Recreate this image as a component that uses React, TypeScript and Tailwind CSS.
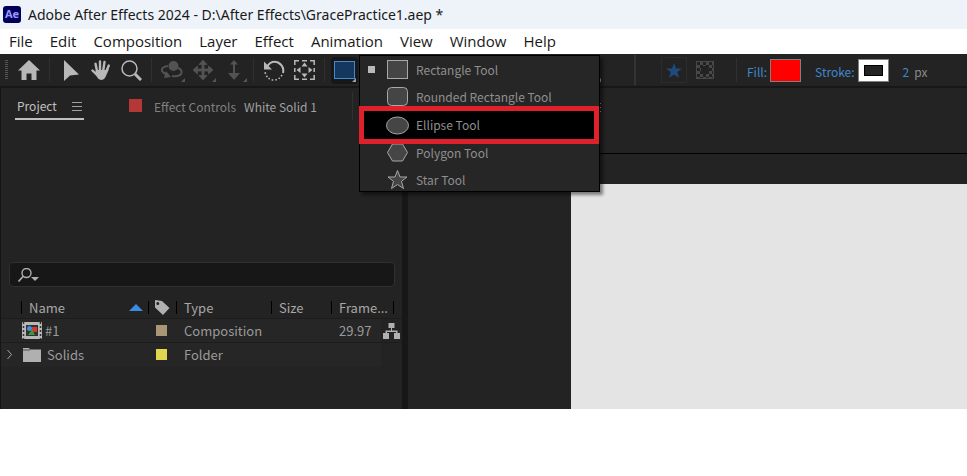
import type { ReactNode } from "react";

const menus = ["File", "Edit", "Composition", "Layer", "Effect", "Animation", "View", "Window", "Help"];

function Divider() {
  return <span className="h-6 w-px shrink-0 bg-[#303030]" />;
}

function Corner({ dim = false }: { dim?: boolean }) {
  return (
    <svg viewBox="0 0 4 4" className={`absolute right-0.5 bottom-0.5 size-1 ${dim ? "text-[#555]" : "text-[#a0a0a0]"}`}>
      <path d="M4 0V4H0Z" fill="currentColor" />
    </svg>
  );
}

function Tool({ label, dim = false, children }: { label: string; dim?: boolean; children: ReactNode }) {
  return (
    <button
      type="button"
      aria-label={label}
      className={`relative flex h-7 w-[31px] shrink-0 items-center justify-center ${dim ? "text-[#535353]" : "text-[#b8b8b8]"}`}
    >
      {children}
      {dim && <Corner dim />}
    </button>
  );
}

function Group({ children }: { children: ReactNode }) {
  return <div className="flex shrink-0 items-center px-1">{children}</div>;
}

const shapes: { name: string; drawing: ReactNode }[] = [
  { name: "Rectangle Tool", drawing: <rect x="1.500" y="1.500" width="20" height="18" /> },
  { name: "Rounded Rectangle Tool", drawing: <rect x="1.500" y="1.500" width="20" height="18" rx="4" /> },
  { name: "Ellipse Tool", drawing: <ellipse cx="11.5" cy="10.5" rx="11" ry="8.5" /> },
  { name: "Polygon Tool", drawing: <path d="M6.500 2H16.500L21.500 10.500L16.500 19H6.500L1.500 10.500Z" /> },
  { name: "Star Tool", drawing: <path d="M11.500 1.500L14 8H21L15.500 12.300L17.500 19.500L11.500 15.500L5.500 19.500L7.500 12.300L2 8H9Z" /> },
];

function ShapeMenu() {
  return (
    <div
      role="menu"
      className="absolute top-0 left-full z-10 h-[137px] w-[241px] border border-black bg-[#262626] shadow-[3px_3px_3px_rgba(0,0,0,0.45)]"
    >
      {shapes.map((shape, i) => (
        <button
          key={shape.name}
          type="button"
          role="menuitem"
          className={
            shape.name === "Ellipse Tool"
              ? "relative z-10 -mx-px -mt-1 -mb-[5px] flex h-[38px] w-[240px] items-center border-[5px] border-[#de212b] bg-black pl-[22px] text-[12px] text-[#8f8f8f]"
              : "flex h-[27px] w-full items-center pl-[26px] text-[12px] text-[#8f8f8f]"
          }
        >
          {i === 0 && <span className="-ml-[18px] mr-[11px] size-[7px] bg-[#b9b9b9]" />}
          <svg viewBox="0 0 23 21" className="h-[21px] w-[23px] shrink-0 fill-[#454545] stroke-[#a8a8a8]">
            {shape.drawing}
          </svg>
          <span className="ml-[7px] whitespace-nowrap">{shape.name}</span>
        </button>
      ))}
    </div>
  );
}

function Toolbar() {
  return (
    <div className="flex h-8 items-center bg-[#232323]">
      <span className="ml-[5px] h-5 w-[3px] shrink-0 bg-[repeating-linear-gradient(to_bottom,#555_0_1px,#232323_1px_2px)]" />
      <button type="button" aria-label="Home" className="mr-[9px] ml-2.5 flex h-7 w-[22px] shrink-0 items-center text-[#b8b8b8]">
        <svg viewBox="0 0 22 20" className="h-5 w-[22px] fill-current">
          <path d="M11 0L22 10.500H18.500V20H13.500V13.500H8.500V20H3.500V10.500H0Z" />
        </svg>
      </button>
      <Divider />
      <Group>
        <Tool label="Selection">
          <svg viewBox="0 0 16 21" className="ml-0.5 h-[21px] w-4 fill-current">
            <path d="M1 0L16 14.500L7 15.500L1 21Z" />
          </svg>
        </Tool>
        <Tool label="Hand">
          <svg viewBox="0 0 20 21" className="h-[21px] w-5 fill-none stroke-current" strokeLinecap="round" strokeWidth="2.400">
            <path d="M6 11L4.500 3.800M9 10V1.500M12.300 10L13.500 2M15 12L17.800 5.500M6 15L1.500 10.500" />
            <path d="M5 10H15.500L18 9L14.500 17Q13 20 10 20Q7.500 20 6 17L4 13Z" className="fill-current" stroke="none" />
          </svg>
        </Tool>
        <Tool label="Zoom">
          <svg viewBox="0 0 21 21" className="h-[21px] w-[21px] fill-none stroke-current">
            <circle cx="8.500" cy="8.500" r="7.500" strokeWidth="1.500" />
            <path d="M14 14L20 20" strokeWidth="3" />
          </svg>
        </Tool>
      </Group>
      <Divider />
      <Group>
        <Tool label="Orbit" dim>
          <svg viewBox="0 0 22 20" className="h-5 w-[22px] fill-none stroke-current" strokeWidth="2">
            <circle cx="12.500" cy="6" r="5" className="fill-current" stroke="none" />
            <path d="M7 6Q0 7 1 11Q2 13 6 14.500M17 8Q22 10 20 14Q18 17 11 16" />
            <path d="M3 18L10 17L5 11Z" className="fill-current" stroke="none" />
          </svg>
        </Tool>
        <Tool label="Pan camera" dim>
          <svg viewBox="0 0 20 20" className="size-5 fill-current">
            <path d="M10 0L14 4.500H11V9H15.500V6L20 10L15.500 14V11H11V15.500H14L10 20L6 15.500H9V11H4.500V14L0 10L4.500 6V9H9V4.500H6Z" stroke="currentColor" strokeWidth=".8" />
          </svg>
        </Tool>
        <Tool label="Dolly" dim>
          <svg viewBox="0 0 14 20" className="h-5 w-3.5 fill-current">
            <path d="M7 0L11 4.500H8V13H13L7 20L1 13H6V4.500H3Z" />
          </svg>
        </Tool>
      </Group>
      <Divider />
      <Group>
        <Tool label="Rotation">
          <svg viewBox="0 0 22 21" className="h-[21px] w-[22px] fill-none stroke-current">
            <path d="M4 6.500Q8.500 0 15 2.500Q21.500 6 20 13" strokeWidth="2" />
            <path d="M1 1.500V9.500H9Z" className="fill-current" stroke="none" />
            <path d="M19 15Q16 20 11 20Q4 20 2 12" strokeWidth="1.600" strokeDasharray="1.500 2" />
          </svg>
        </Tool>
        <Tool label="Pan Behind">
          <svg viewBox="0 0 21 20" className="h-5 w-[21px] fill-current">
            <path d="M.800 5V.800H5M8 .800H13M16 .800H20.200V5M20.200 8V12M20.200 15V19.200H16M13 19.200H8M5 19.200H.800V15M.800 12V8" fill="none" stroke="currentColor" strokeWidth="1.500" />
            <path d="M10.500 2.500L13.500 6.500H7.500ZM10.500 17.500L13.500 13.500H7.500ZM2.500 10L6.500 7V13ZM18.500 10L14.500 7V13Z" />
          </svg>
        </Tool>
      </Group>
      <Divider />
      <Group>
        <div className="relative flex h-[30px] w-[30px] items-center justify-center">
          <button type="button" aria-label="Shape tool" className="relative flex h-[27px] w-[27px] items-center justify-center rounded-sm bg-[#171717]">
            <span className="h-[18px] w-[21px] border border-[#4687cf] bg-[#14375f]" />
            <Corner />
          </button>
          <ShapeMenu />
        </div>
      </Group>
      <span className="relative h-7 w-[240px] shrink-0">
        <Corner />
      </span>
      <span className="ml-[31px] h-[30px] w-0.5 shrink-0 bg-[#333]" />
      <button type="button" aria-label="Star fill" className="ml-[25px] flex size-[26px] shrink-0 items-center justify-center border border-[#2c2c2c] text-[#1f4a7d]">
        <svg viewBox="0 0 16 15" className="h-[15px] w-4 fill-current">
          <path d="M8 0L10 5.500H16L11.300 9L13 15L8 11.500L3 15L4.700 9L0 5.500H6Z" />
        </svg>
      </button>
      <button type="button" aria-label="Mask mode" className="mr-[22px] ml-[9px] flex size-[18px] shrink-0 items-center justify-center border border-[#484848] bg-[repeating-conic-gradient(#484848_0_25%,#222_0_50%)] bg-size-[6px_6px]">
        <span className="size-2 rounded-full bg-[#222]" />
      </button>
      <Divider />
      <div className="flex shrink-0 items-center pl-2.5 text-[12px] text-[#4187cf]">
        <button type="button" className="pt-[3px]">Fill:</button>
        <button type="button" aria-label="Fill colour" className="ml-[3px] h-[23px] w-[31px] border border-[#808080] bg-[#fe0000]" />
        <button type="button" className="ml-3.5 pt-[3px]">Stroke:</button>
        <button type="button" aria-label="Stroke colour" className="ml-[3px] flex h-[23px] w-[31px] items-center justify-center border border-[#808080] bg-white">
          <span className="h-[11px] w-[19px] border border-black bg-[#232323]" />
        </button>
        <button type="button" className="ml-3.5 pt-[3px]">2</button>
        <span className="ml-[5px] pt-[3px] text-[#8a8a8a]">px</span>
      </div>
    </div>
  );
}

function Lines() {
  return (
    <svg viewBox="0 0 10 9" className="h-[9px] w-2.5 stroke-[#a0a0a0]">
      <path d="M0 .5H10M0 4.500H10M0 8.500H10" />
    </svg>
  );
}

function ItemTable() {
  const head = "border-0 p-0 text-left font-normal";
  const bar = "flex h-[21px] items-center";
  const tick = "h-[13px] w-px shrink-0 bg-black";
  return (
    <table className="mt-2.5 w-full table-fixed border-collapse text-[13px] text-[#9a9a9a]">
      <colgroup>
        <col className="w-[20px]" />
        <col className="w-[127px]" />
        <col className="w-[28px]" />
        <col className="w-[95px]" />
        <col className="w-[60px]" />
        <col className="w-[50px]" />
        <col />
      </colgroup>
      <thead className="text-[#a8a8a8]">
        <tr className="border-b border-[#1c1c1c]">
          <th className={head} />
          <th className={head}>
            <span className={bar}>
              <span className={tick} />
              <span className="ml-[7px]">Name</span>
              <svg viewBox="0 0 14 7" className="mr-[5px] ml-auto h-[7px] w-3.5 fill-[#3b8de0]"><path d="M0 7L7 0L14 7Z" /></svg>
            </span>
          </th>
          <th className={head} aria-label="Label">
            <span className={bar}>
              <span className={tick} />
              <svg viewBox="0 0 16 15" className="ml-[5px] h-[15px] w-4 fill-[#b0b0b0]">
                <path fillRule="evenodd" d="M1 0L8 1L15.500 8L9 15L1 7.500ZM3.800 2A1.500 1.500 0 1 0 3.800 5A1.500 1.500 0 0 0 3.800 2Z" />
              </svg>
            </span>
          </th>
          <th className={head}><span className={bar}><span className={tick} /><span className="ml-[7px]">Type</span></span></th>
          <th className={head}><span className={bar}><span className={tick} /><span className="ml-[7px]">Size</span></span></th>
          <th className={head} colSpan={2}>
            <span className={bar}><span className={tick} /><span className="ml-[7px]">Frame...</span><span className={`${tick} mr-2 ml-auto`} /></span>
          </th>
        </tr>
      </thead>
      <tbody>
        <tr className="h-6 border-b border-[#1c1c1c] bg-[#262626]">
          <td />
          <td className="p-0">
            <span className="flex items-center gap-[3px]">
              <svg viewBox="0 0 20 17" className="ml-px h-[17px] w-5">
                <path d="M0 0H20V17H0Z" fill="#b8b8b8" />
                <path d="M1.500 0V17M18.500 0V17" stroke="#333" strokeWidth="1.500" strokeDasharray="2 2" />
                <path d="M4 3H16V14H4Z" fill="#333" />
                <path d="M10 5H15V10H10Z" fill="#d33a32" />
                <circle cx="7.500" cy="6.500" r="2.500" fill="#4190d8" />
                <path d="M6 13L10 7.500L13 13Z" fill="#3d9a3c" />
              </svg>
              #1
            </span>
          </td>
          <td className="p-0"><span className="ml-2 block size-[11px] bg-[#ab9577]" /></td>
          <td className="p-0 pl-2">Composition</td>
          <td />
          <td className="p-0 pl-2">29.97</td>
          <td className="bg-[#232323] p-0">
            <svg viewBox="0 0 17 16" className="ml-0.5 h-4 w-[17px] fill-[#b0b0b0]">
              <path d="M5.500 0H11.500V5H9V7.500H14.500V10H17V16H11V10H13V9H4V10H6V16H0V10H2.500V7.500H8V5H5.500Z" />
            </svg>
          </td>
        </tr>
        <tr className="h-6 bg-[#262626]">
          <td className="p-0">
            <button type="button" aria-label="Expand Solids" className="ml-1.5 flex">
              <svg viewBox="0 0 5 9" className="h-[9px] w-[5px] fill-none stroke-[#a8a8a8]"><path d="M.5 0L4.500 4.500L.5 9" /></svg>
            </button>
          </td>
          <td className="p-0">
            <span className="flex items-center gap-1.5">
              <svg viewBox="0 0 18 14" className="ml-0.5 h-3.5 w-[18px] fill-[#b0b0b0]"><path d="M0 0H6L7 1.500H18V14H0Z" /><path d="M0 2H7" stroke="#262626" strokeWidth=".7" /></svg>
              Solids
            </span>
          </td>
          <td className="p-0"><span className="ml-2 block size-[11px] bg-[#e3d64f]" /></td>
          <td className="p-0 pl-2">Folder</td>
          <td />
          <td />
          <td className="bg-[#232323]" />
        </tr>
      </tbody>
    </table>
  );
}

function ProjectPanel() {
  return (
    <section className="w-[402px] shrink-0 border-l border-[#151515] bg-[#232323]">
      <div className="flex h-8 text-[12px] text-[#808080]">
        <button type="button" className="mt-2 ml-3.5 flex h-6 w-[69px] items-center justify-between border-b-2 border-[#c0c0c0] px-0.5 pb-0.5 text-[#c0c0c0]">
          Project
          <Lines />
        </button>
        <button type="button" className="ml-[45px] flex h-8 items-center pt-1.5">
          <span className="mb-1 size-[13px] bg-[#b43836]" />
          <span className="ml-3">Effect Controls</span>
          <span className="ml-2 text-[#a0a0a0]">White Solid 1</span>
        </button>
        <span className="mt-1 mr-[49px] ml-auto h-7 w-px bg-[#303030]" />
      </div>
      <label className="mt-[142px] mr-[7px] ml-2 flex h-[25px] items-center rounded-sm border border-[#303030] bg-[#171717] pl-2">
        <svg viewBox="0 0 22 14" className="h-3.5 w-[22px] fill-none stroke-[#b0b0b0]">
          <circle cx="8.500" cy="5" r="4.500" strokeWidth="1.400" />
          <path d="M5.500 8L.5 13.500" strokeWidth="1.600" />
          <path d="M13 9H21L17 13Z" className="fill-[#b0b0b0]" stroke="none" />
        </svg>
        <input type="search" aria-label="Search project" className="min-w-0 flex-1 bg-transparent text-[13px] text-[#b0b0b0] outline-none" />
      </label>
      <ItemTable />
    </section>
  );
}

export default function App() {
  return (
    <main className="min-h-screen overflow-hidden bg-white font-['Noto_Sans_CJK_SC','Noto_Sans',sans-serif]">
      <header className="flex h-[29px] items-center bg-[#eef3fa] font-['Noto_Sans',sans-serif] text-[14px] text-[#191919]">
        <span className="ml-[3px] flex h-[17px] w-[18px] items-center justify-center rounded-[3px] bg-[#00005b] text-[11px] font-bold text-[#9999ff]">Ae</span>
        <h1 className="ml-[7px] whitespace-nowrap">Adobe After Effects 2024 - D:\After Effects\GracePractice1.aep *</h1>
      </header>
      <nav className="flex h-[25px] items-center gap-[17px] bg-white pl-[9px] font-['Open_Sans',sans-serif] text-[15px] text-[#191919]">
        {menus.map((menu) => (
          <button key={menu} type="button">{menu}</button>
        ))}
      </nav>
      <Toolbar />
      <div className="flex min-h-[323px] border-t-2 border-[#171717]">
        <ProjectPanel />
        <span className="w-1.5 shrink-0 bg-[#171717]" />
        <section className="flex min-w-0 flex-1 flex-col bg-[#232323]">
          <div className="flex h-[66px] border-b border-black pt-[15px] pl-[183px]">
            <button type="button" aria-label="Panel menu" className="flex h-[9px]"><Lines /></button>
          </div>
          <div className="mt-[30px] ml-[163px] flex-1 bg-[#e4e4e4]" />
        </section>
      </div>
    </main>
  );
}
